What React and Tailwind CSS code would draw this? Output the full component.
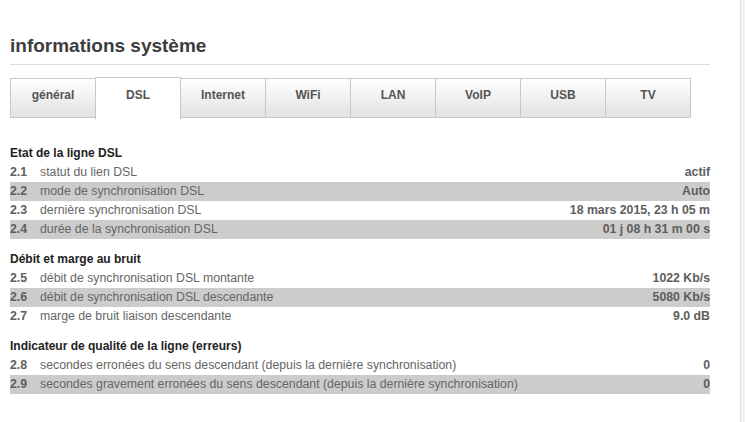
import React from 'react';

const tabs = ['général', 'DSL', 'Internet', 'WiFi', 'LAN', 'VoIP', 'USB', 'TV'];

const sections = [
  {
    title: 'Etat de la ligne DSL',
    rows: [
      ['2.1', 'statut du lien DSL', 'actif'],
      ['2.2', 'mode de synchronisation DSL', 'Auto'],
      ['2.3', 'dernière synchronisation DSL', '18 mars 2015, 23 h 05 m'],
      ['2.4', 'durée de la synchronisation DSL', '01 j 08 h 31 m 00 s'],
    ],
  },
  {
    title: 'Débit et marge au bruit',
    rows: [
      ['2.5', 'débit de synchronisation DSL montante', '1022 Kb/s'],
      ['2.6', 'débit de synchronisation DSL descendante', '5080 Kb/s'],
      ['2.7', 'marge de bruit liaison descendante', '9.0 dB'],
    ],
  },
  {
    title: 'Indicateur de qualité de la ligne (erreurs)',
    rows: [
      ['2.8', 'secondes erronées du sens descendant (depuis la dernière synchronisation)', '0'],
      ['2.9', 'secondes gravement erronées du sens descendant (depuis la dernière synchronisation)', '0'],
    ],
  },
];

export default function App() {
  return (
    <div className="flex min-h-[422px] bg-white font-['Liberation_Sans',Arial,sans-serif]">
      <div className="w-[740px] pl-[10px] pr-[30px]">
        {/* Title */}
        <h1 className="pt-[35px] pb-[7px] text-[19px] leading-[22px] font-bold text-[#3d3d3d]">
          informations système
        </h1>
        <div className="h-px bg-[#dcdcdc]" />

        {/* Tabs */}
        <div className="mt-[12px] flex">
          {tabs.map((t, i) =>
            t === 'DSL' ? (
              <div
                key={t}
                className="-ml-px h-[42px] w-[86px] border border-b-0 border-[#c8c8c8] bg-white pt-[8px] text-center text-[12px] font-bold text-[#555]"
              >
                {t}
              </div>
            ) : (
              <div
                key={t}
                className={`${i === 0 ? '' : '-ml-px'} mt-[1px] h-[40px] w-[86px] border border-[#c8c8c8] bg-gradient-to-b from-white to-[#e2e2e2] pt-[7px] text-center text-[12px] font-bold text-[#555]`}
              >
                {t}
              </div>
            )
          )}
        </div>

        {/* Sections */}
        <div className="mt-[24px]">
          {sections.map((s, si) => (
            <div key={s.title} className={si === 0 ? '' : 'mt-[10px]'}>
              <h2 className="h-[20px] text-[12px] leading-[20px] font-bold text-[#222]">{s.title}</h2>
              {s.rows.map(([n, label, value], ri) => (
                <div
                  key={n}
                  className={`flex h-[19px] items-center text-[12.3px] ${ri % 2 === 1 ? 'bg-[#cccccc]' : ''}`}
                >
                  <span className="w-[30px] font-bold text-[#5e5e5e]">{n}</span>
                  <span className="flex-1 truncate text-[#666]">{label}</span>
                  <span className="font-bold text-[#5e5e5e]">{value}</span>
                </div>
              ))}
            </div>
          ))}
        </div>
      </div>
      <div className="w-[5px] border-l border-[#e4e4e4] bg-[#f3f3f3]" />
    </div>
  );
}
